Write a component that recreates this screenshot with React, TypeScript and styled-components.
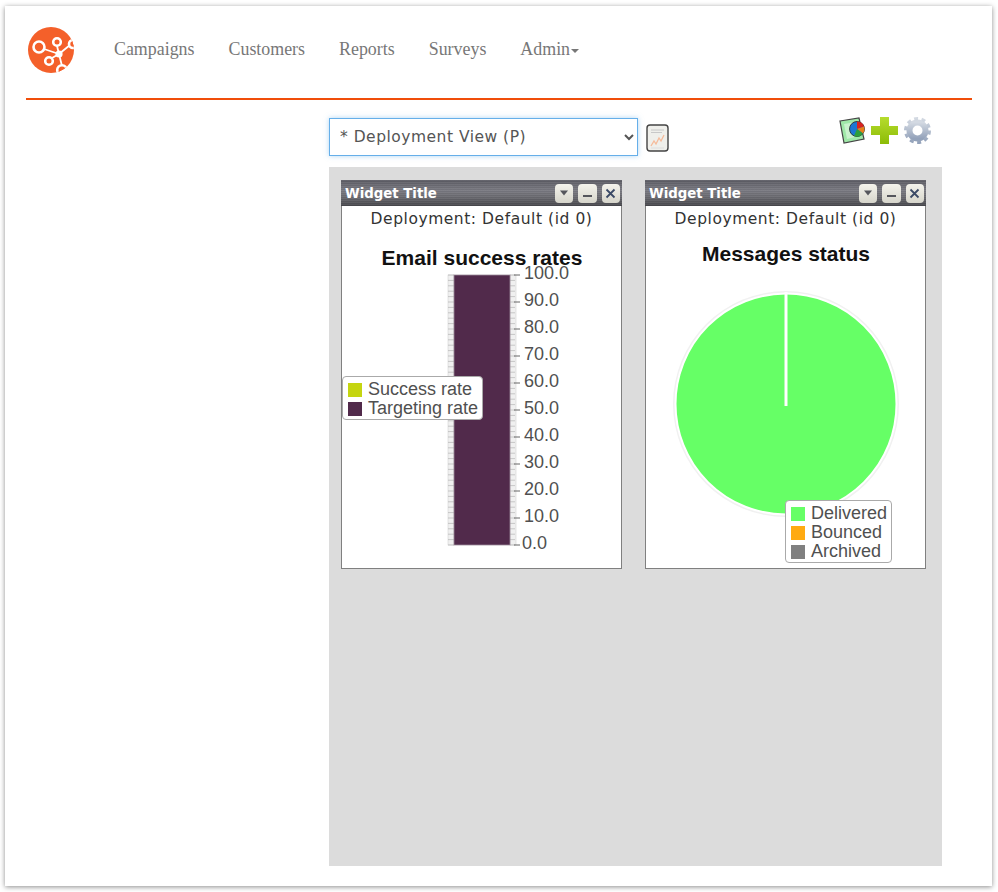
import styled, { createGlobalStyle } from 'styled-components'

const Global = createGlobalStyle`
    html, body {
        margin: 0;
        background: #fff;
    }
    body {
        box-sizing: border-box;
        min-height: 892px;
        padding: 6px 0 0 5px;
    }
`

const Frame = styled.div`
    box-sizing: border-box;
    width: 987px;
    height: 880px;
    padding: 21px 20px 0 21px;
    background: #fff;
    box-shadow: 0 1px 5px rgba(0,0,0,0.45);
`

const TopBar = styled.header`
    display: flex;
    align-items: flex-start;
    height: 71px;
    border-bottom: 2px solid #f04e0a;
`

const Logo = styled.svg`
    width: 48px;
    height: 46px;
    margin-left: 2px;
    flex-shrink: 0;
`

const Nav = styled.nav`
    display: flex;
    gap: 34px;
    margin-left: 38px;
    padding-top: 13px;
    font-family: "Liberation Serif", serif;
    font-size: 17.9px;
    line-height: 18px;
    color: #777;
`

const Caret = styled.span`
    display: inline-block;
    width: 0;
    height: 0;
    margin-left: 1px;
    vertical-align: middle;
    border-top: 4px solid #777;
    border-left: 4px solid transparent;
    border-right: 4px solid transparent;
`

const Main = styled.main`
    width: 613px;
    margin: 18px 0 0 303px;
`

const Toolbar = styled.div`
    display: flex;
    align-items: flex-start;
    height: 38px;
    margin-bottom: 11px;
`

const ViewSelect = styled.select`
    box-sizing: border-box;
    width: 309px;
    height: 38px;
    padding: 0 6px;
    font-family: "DejaVu Sans", sans-serif;
    font-size: 15.5px;
    letter-spacing: 0.5px;
    color: #555;
    background: #fff;
    border: 1px solid #66afe9;
    border-radius: 0;
    outline: none;
    box-shadow: 0 0 5px rgba(102,175,233,0.5);
`

const DocIcon = styled.svg`
    width: 23px;
    height: 28px;
    margin: 6px 0 0 8px;
`

const ToolIcons = styled.div`
    display: flex;
    gap: 5px;
    margin: -1px 11px 0 auto;
`

const ToolIcon = styled.svg`
    width: 27px;
    height: 27px;

    & + & + & {
        margin-left: 1px;
    }
`

const Board = styled.section`
    box-sizing: border-box;
    display: grid;
    grid-template-columns: 281px 281px;
    grid-auto-rows: 389px;
    gap: 23px;
    height: 699px;
    padding: 13px 12px;
    background: #dcdcdc;
`

const Widget = styled.article`
    position: relative;
    box-sizing: border-box;
    background: #fff;
    border: 1px solid #808080;
    border-top: none;
`

const WidgetHead = styled.div`
    display: flex;
    align-items: center;
    height: 26px;
    margin: 0 -1px;
    padding: 0 2px 0 4px;
    background:
        repeating-linear-gradient(to bottom, rgba(255,255,255,0.05) 0 1px, rgba(0,0,0,0.04) 1px 2px),
        linear-gradient(to bottom, #5c5c64 0%, #7a7a82 40%, #6a6a70 65%, #47474c 100%);
`

const WidgetTitle = styled.span`
    flex: 1;
    font-family: "DejaVu Sans", sans-serif;
    font-size: 13.3px;
    font-weight: 700;
    color: #fff;
`

const HeadButtons = styled.div`
    display: flex;
    gap: 5px;
`

const HeadButton = styled.button`
    display: flex;
    align-items: center;
    justify-content: center;
    width: 18.5px;
    height: 19px;
    padding: 0;
    border: none;
    border-radius: 4px;
    background: linear-gradient(to bottom, #f4f3ec, #d6d5cb);
`

const Deployment = styled.div`
    height: 24px;
    font-family: "DejaVu Sans", sans-serif;
    font-size: 15.5px;
    letter-spacing: 0.55px;
    line-height: 26px;
    text-align: center;
    color: #333;
`

const Chart = styled.svg`
    display: block;
    width: 279px;
    height: 338px;
    font-family: "Liberation Sans", sans-serif;
`

const Legend = styled.div<{ $left: number; $top: number }>`
    position: absolute;
    left: ${p => p.$left}px;
    top: ${p => p.$top}px;
    padding: 3px 4px 1px 5px;
    background: #fff;
    border: 1px solid #aaa;
    border-radius: 4px;
    font-family: "Liberation Sans", sans-serif;
    font-size: 18px;
    line-height: 19px;
    color: #505050;
`

const LegendRow = styled.div`
    display: flex;
    align-items: center;
    gap: 6px;
    white-space: nowrap;
`

const Swatch = styled.span<{ $color: string }>`
    width: 14px;
    height: 14px;
    background: ${p => p.$color};
`

const axis = [100, 90, 80, 70, 60, 50, 40, 30, 20, 10, 0]

function Buttons() {
    return (
        <HeadButtons>
            <HeadButton>
                <svg width="10" height="6" viewBox="0 0 10 6"><path d="M1 0.5h8L5 5.5z" fill="#55565c" /></svg>
            </HeadButton>
            <HeadButton>
                <svg width="11" height="10" viewBox="0 0 11 10"><rect x="1" y="7" width="9" height="2" fill="#55565c" /></svg>
            </HeadButton>
            <HeadButton>
                <svg width="11" height="11" viewBox="0 0 11 11"><path d="M1.5 1.5l8 8M9.5 1.5l-8 8" stroke="#3b4a66" strokeWidth="1.8" /></svg>
            </HeadButton>
        </HeadButtons>
    )
}

function RatesChart() {
    const top = 45
    const step = 27
    const minor: number[] = []
    for (let i = 0; i <= 50; i++) minor.push(top + i * 5.4)
    return (
        <Chart viewBox="0 0 279 338">
            <text x="140" y="35" textAnchor="middle" fontSize="21" fontWeight="700" fill="#111">Email success rates</text>
            <rect x="106" y={top} width="6" height="270" fill="#f0f0f0" stroke="#ccc" strokeWidth="0.5" />
            <rect x="168" y={top} width="6" height="270" fill="#f0f0f0" stroke="#ccc" strokeWidth="0.5" />
            {minor.map(y => (
                <g key={y} stroke="#b5b5b5" strokeWidth="0.7">
                    <line x1="106" x2="112" y1={y} y2={y} />
                    <line x1="168" x2="173" y1={y} y2={y} />
                </g>
            ))}
            <rect x="112" y={top} width="56" height="270" fill="#512a4b" stroke="#9b8a98" strokeWidth="0.8" />
            {axis.map((v, i) => (
                <g key={v}>
                    <line x1="172" x2="178" y1={top + i * step} y2={top + i * step} stroke="#666" strokeWidth="1" />
                    <text x={v === 0 ? 180 : 182} y={top + i * step + 4} fontSize="18" fill="#505050">{v.toFixed(1)}</text>
                </g>
            ))}
        </Chart>
    )
}

function StatusChart() {
    return (
        <Chart viewBox="0 0 279 338">
            <text x="140" y="31" textAnchor="middle" fontSize="21" fontWeight="700" fill="#111">Messages status</text>
            <circle cx="140" cy="174" r="113" fill="#f1f1f1" />
            <circle cx="140" cy="174" r="110.5" fill="#66ff66" stroke="#fff" strokeWidth="2" />
            <line x1="140" x2="140" y1="62" y2="176" stroke="#fff" strokeWidth="3" />
        </Chart>
    )
}

export default function App() {
    return (
        <>
            <Global />
            <Frame>
                <TopBar>
                    <Logo viewBox="0 0 48 46">
                        <defs>
                            <clipPath id="logo-clip"><circle cx="23" cy="23" r="23" /></clipPath>
                        </defs>
                        <circle cx="23" cy="23" r="23" fill="#f4602a" />
                        <g clipPath="url(#logo-clip)">
                            <path d="M16 22l15 5M29 19l2 8M24 31l7-4M31 27l11-9M31 27l3 12" stroke="#fff" strokeWidth="1.8" fill="none" />
                            <g fill="#f4602a" stroke="#fff" strokeWidth="2.6">
                                <circle cx="11" cy="20" r="5.5" />
                                <circle cx="29" cy="15" r="3.8" />
                                <circle cx="21" cy="34" r="3.8" />
                                <circle cx="45" cy="17" r="4" />
                                <circle cx="34" cy="43" r="4.8" />
                            </g>
                            <circle cx="31" cy="27" r="3.6" fill="#fff" />
                        </g>
                    </Logo>
                    <Nav>
                        <span>Campaigns</span>
                        <span>Customers</span>
                        <span>Reports</span>
                        <span>Surveys</span>
                        <span>Admin<Caret /></span>
                    </Nav>
                </TopBar>
                <Main>
                    <Toolbar>
                        <ViewSelect defaultValue="p">
                            <option value="p">* Deployment View (P)</option>
                        </ViewSelect>
                        <DocIcon viewBox="0 0 23 28">
                            <rect x="1" y="1" width="21" height="26" rx="3" fill="#efefeb" stroke="#444" strokeWidth="1.4" />
                            <path d="M5 6h13M5 8.5h11" stroke="#c8c8c8" strokeWidth="1.2" />
                            <path d="M5 22l3-5 2 3 3-6 2 3 3-6" fill="none" stroke="#f6bb9a" strokeWidth="1.3" />
                            <path d="M5 24h13" stroke="#ddd" strokeWidth="1" />
                        </DocIcon>
                        <ToolIcons>
                            <ToolIcon viewBox="0 0 27 27">
                                <path d="M1 4L20 1l5 21-20 4z" fill="#9fe8a8" stroke="#444" strokeWidth="1.2" />
                                <path d="M5 7l12-2 3 14-12 3z" fill="#c9f2cd" />
                                <circle cx="18" cy="12" r="7.5" fill="#1c76d2" stroke="#222" strokeWidth="0.8" />
                                <path d="M18 12V4.5A7.5 7.5 0 0 1 25 9.5z" fill="#d8231f" />
                                <path d="M18 12l7-2.5A7.5 7.5 0 0 1 24 16.5z" fill="#e8801a" />
                                <path d="M18 12l6 4.5A7.5 7.5 0 0 1 15 19z" fill="#2c9e3a" />
                            </ToolIcon>
                            <ToolIcon viewBox="0 0 27 27">
                                <defs>
                                    <linearGradient id="plus-fill" x1="0" y1="0" x2="0" y2="1">
                                        <stop offset="0" stopColor="#b6dc2e" />
                                        <stop offset="1" stopColor="#8cbc06" />
                                    </linearGradient>
                                </defs>
                                <path d="M9 0h9v9h9v9h-9v9H9v-9H0V9h9z" fill="url(#plus-fill)" />
                            </ToolIcon>
                            <ToolIcon viewBox="0 0 27 27">
                                <defs>
                                    <linearGradient id="gear-fill" x1="0" y1="0" x2="0" y2="1">
                                        <stop offset="0" stopColor="#d3d9e2" />
                                        <stop offset="1" stopColor="#93a2ba" />
                                    </linearGradient>
                                </defs>
                                <circle cx="13.5" cy="13.5" r="8" fill="none" stroke="url(#gear-fill)" strokeWidth="6" />
                                <circle cx="13.5" cy="13.5" r="12" fill="none" stroke="url(#gear-fill)" strokeWidth="3" strokeDasharray="4 3.54" />
                            </ToolIcon>
                        </ToolIcons>
                    </Toolbar>
                    <Board>
                        <Widget>
                            <WidgetHead>
                                <WidgetTitle>Widget Title</WidgetTitle>
                                <Buttons />
                            </WidgetHead>
                            <Deployment>Deployment: Default (id 0)</Deployment>
                            <RatesChart />
                            <Legend $left={0} $top={196}>
                                <LegendRow><Swatch $color="#c5d510" />Success rate</LegendRow>
                                <LegendRow><Swatch $color="#512a4b" />Targeting rate</LegendRow>
                            </Legend>
                        </Widget>
                        <Widget>
                            <WidgetHead>
                                <WidgetTitle>Widget Title</WidgetTitle>
                                <Buttons />
                            </WidgetHead>
                            <Deployment>Deployment: Default (id 0)</Deployment>
                            <StatusChart />
                            <Legend $left={139} $top={320}>
                                <LegendRow><Swatch $color="#66ff66" />Delivered</LegendRow>
                                <LegendRow><Swatch $color="#ffaa11" />Bounced</LegendRow>
                                <LegendRow><Swatch $color="#808080" />Archived</LegendRow>
                            </Legend>
                        </Widget>
                    </Board>
                </Main>
            </Frame>
        </>
    )
}
